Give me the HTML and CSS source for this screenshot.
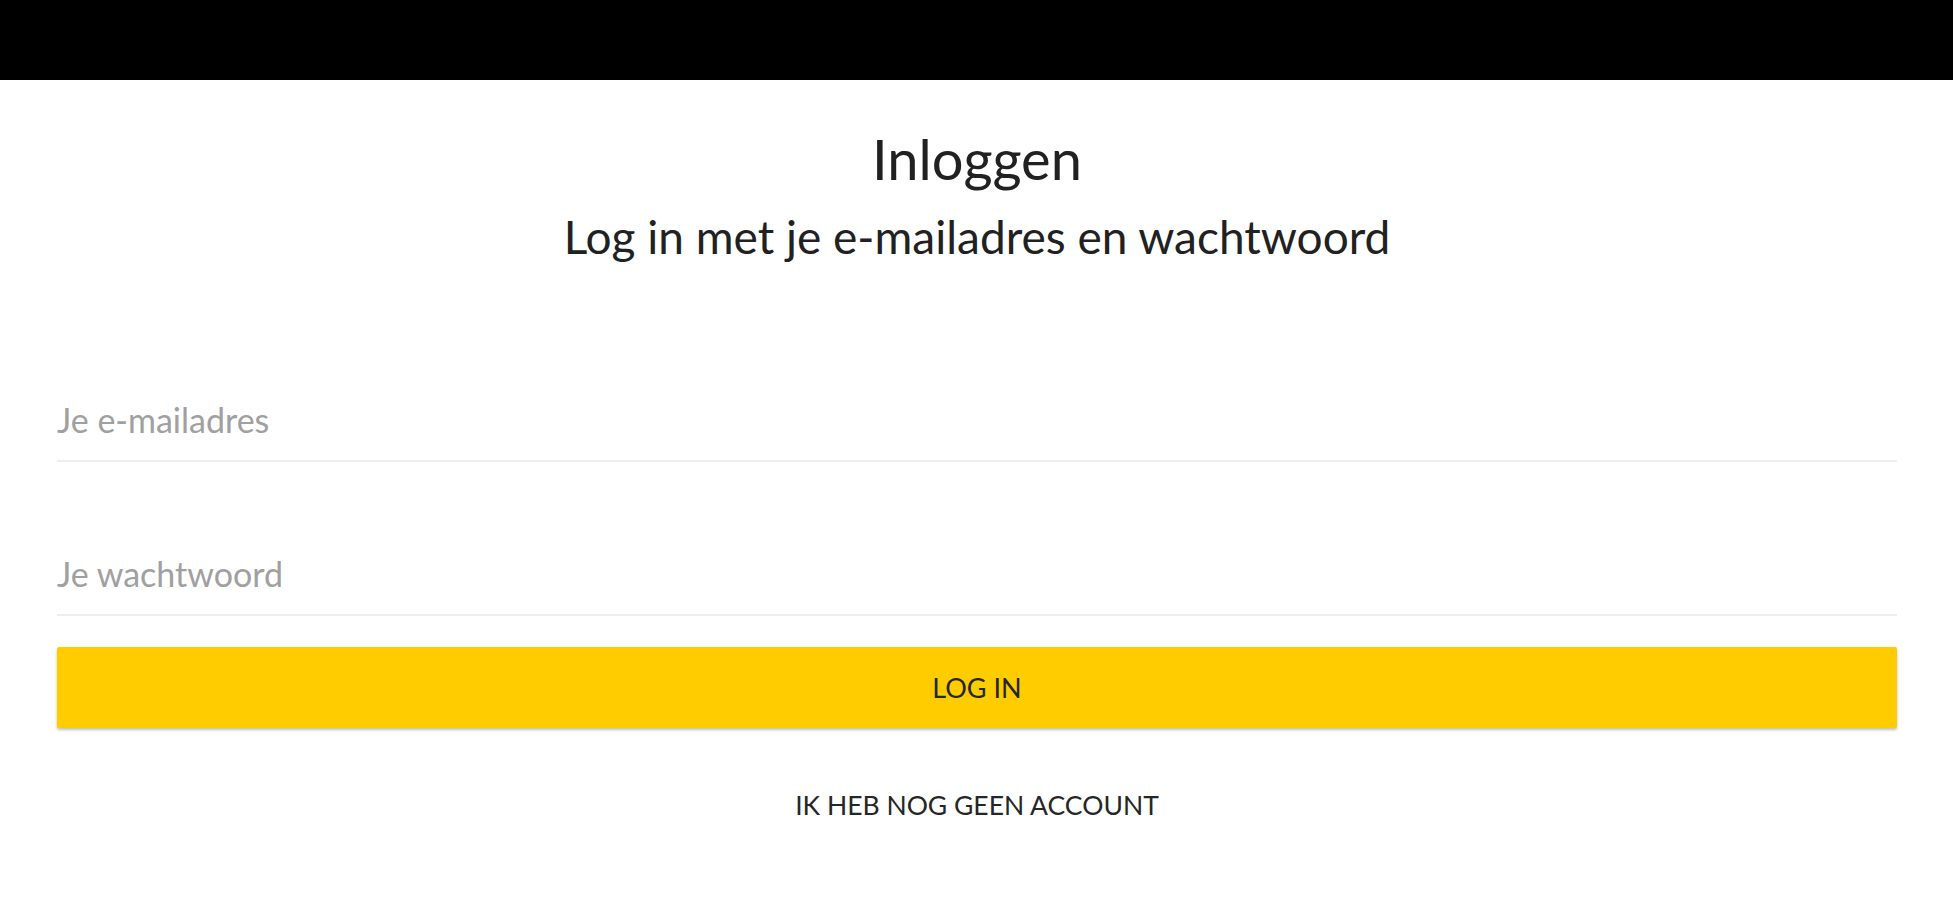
FILE: index.html
```html
<!DOCTYPE html>
<html lang="nl">

<head>
  <meta charset="UTF-8">
  <meta name="viewport" content="width=device-width, initial-scale=1.0">
  <title>Inloggen</title>
  <link rel="stylesheet" href="styles.css">
</head>

<body>
  <div class="topbar"></div>
  <div class="login">
    <div class="login-head">
      <h1 class="login-title">Inloggen</h1>
      <p class="login-sub">Log in met je e-mailadres en wachtwoord</p>
    </div>
    <form class="login-form">
      <input class="field field-email" type="email" placeholder="Je e-mailadres">
      <input class="field field-pass" type="password" placeholder="Je wachtwoord">
      <button class="btn-login" type="button">LOG IN</button>
      <a class="link-register" href="#">IK HEB NOG GEEN ACCOUNT</a>
    </form>
  </div>
</body>

</html>
```
FILE: styles.css
```css
* {
  padding: 0;
  margin: 0;
  box-sizing: border-box;
}

body {
  background-color: #fff;
  font-family: Lato, "Liberation Sans", sans-serif;
  color: #212121;
}

.topbar {
  height: 80px;
  background-color: #000;
}

.login {
  padding: 0 56px 0 57px;
}

.login-head {
  text-align: center;
  padding-top: 45px;
}

.login-title {
  font-size: 56px;
  font-weight: 400;
  line-height: 67px;
}

.login-sub {
  margin-top: 17px;
  font-size: 46px;
  line-height: 55px;
}

.login-form {
  display: flex;
  flex-direction: column;
  margin-top: 114px;
}

.field {
  height: 84px;
  border: 0;
  border-bottom: 2px solid #eeeeee;
  outline: none;
  font: 34px Lato, "Liberation Sans", sans-serif;
  color: #212121;
  background: transparent;
}

.field::placeholder {
  color: #a0a0a0;
}

.field-pass {
  margin-top: 70px;
}

.btn-login {
  margin-top: 31px;
  height: 81px;
  border: 0;
  border-radius: 2px;
  background-color: #ffcc00;
  box-shadow: 0 2px 3px rgba(0, 0, 0, .25);
  font: 27px Lato, "Liberation Sans", sans-serif;
  color: #262626;
  cursor: pointer;
}

.link-register {
  align-self: center;
  margin-top: 61px;
  font-size: 26.5px;
  line-height: 32px;
  color: #262626;
  text-decoration: none;
}
```
